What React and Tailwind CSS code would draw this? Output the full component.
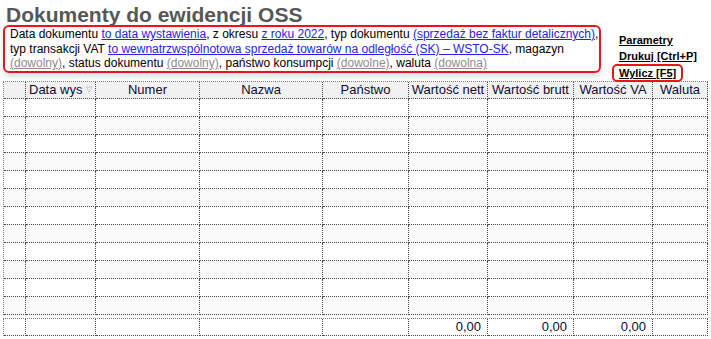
const cols = [22, 70, 104, 123, 86, 79, 86, 79, 55];

const heads = ["", "Data wys", "Numer", "Nazwa", "Państwo", "Wartość nett", "Wartość brutt", "Wartość VA", "Waluta"];

const rows = Array.from({ length: 12 }, (_, i) => i);

const cell = "border-r border-b border-dotted border-[#4a4a4a] p-0 overflow-hidden whitespace-nowrap";

function Link({ children }) {
  return <span className="text-[#2323f0] underline">{children}</span>;
}

function Any({ children }) {
  return <span className="text-[#8c8c8c] underline">{children}</span>;
}

export default function App() {
  return (
    <div className="w-[711px] h-[339px] bg-white overflow-hidden font-['Liberation_Sans',Arial,sans-serif] text-black">
      <div className="h-[25px] pt-[4px] pl-[6px]">
        <h1 className="text-[21px] leading-[22px] font-bold text-[#575757]">Dokumenty do ewidencji OSS</h1>
      </div>

      <div className="flex items-start h-[56px]">
        <div className="ml-[3px] w-[598px] h-[48px] border-2 border-[#e8161c] rounded-[6px] px-[5px] text-[12px] leading-[14.5px] whitespace-nowrap shadow-[0_4px_5px_rgba(0,0,0,0.12)]">
          <div>
            Data dokumentu <Link>to data wystawienia</Link>, z okresu <Link>z roku 2022</Link>, typ dokumentu{" "}
            <Link>(sprzedaż bez faktur detalicznych)</Link>,
          </div>
          <div>
            typ transakcji VAT <Link>to wewnatrzwspólnotowa sprzedaż towarów na odległość (SK) – WSTO-SK</Link>, magazyn
          </div>
          <div>
            <Any>(dowolny)</Any>, status dokumentu <Any>(dowolny)</Any>, państwo konsumpcji <Any>(dowolne)</Any>, waluta{" "}
            <Any>(dowolna)</Any>
          </div>
        </div>

        <div className="ml-[11px] mt-[7px] flex flex-col items-start text-[11px] font-bold">
          <span className="pl-[7px] leading-[16px] underline">Parametry</span>
          <span className="pl-[7px] leading-[16px] underline">Drukuj [Ctrl+P]</span>
          <span className="border-2 border-[#e8161c] rounded-[5px] px-[5px] leading-[14px] underline bg-white">Wylicz [F5]</span>
        </div>
      </div>

      <table className="ml-[3px] table-fixed border-separate border-spacing-0 border-t border-l border-dotted border-[#7a7a7a] text-[13px] text-[#0c0c36]">
        <colgroup>
          {cols.map((w, i) => (
            <col key={i} style={{ width: w }} />
          ))}
        </colgroup>
        <thead>
          <tr className="h-[17px] bg-[#f1f1f1]">
            {heads.map((h, i) =>
              i === 1 ? (
                <th key={i} className={cell + " font-normal text-left pl-[3px]"}>
                  <div className="flex items-center leading-[16px]">
                    <span>{h}</span>
                    <span className="ml-[4px] text-[8px] text-[#a8a8a8]">▽</span>
                  </div>
                </th>
              ) : (
                <th key={i} className={cell + " font-normal text-center leading-[16px]"}>
                  {h}
                </th>
              )
            )}
          </tr>
        </thead>
        <tbody>
          {rows.map((r) => (
            <tr key={r} className={"h-[18px] " + (r % 2 ? "bg-[#fafafa]" : "bg-white")}>
              {cols.map((_, i) => (
                <td key={i} className={cell}></td>
              ))}
            </tr>
          ))}
        </tbody>
      </table>

      <table className="ml-[3px] mt-[3px] table-fixed border-separate border-spacing-0 border-t border-l border-dotted border-[#7a7a7a] text-[13px] text-[#0c0c36]">
        <colgroup>
          {cols.map((w, i) => (
            <col key={i} style={{ width: w }} />
          ))}
        </colgroup>
        <tbody>
          <tr className="h-[17px]">
            {cols.map((_, i) => (
              <td key={i} className={cell + " text-right pr-[6px] leading-[16px]"}>
                {i >= 5 && i <= 7 ? "0,00" : ""}
              </td>
            ))}
          </tr>
        </tbody>
      </table>
    </div>
  );
}
